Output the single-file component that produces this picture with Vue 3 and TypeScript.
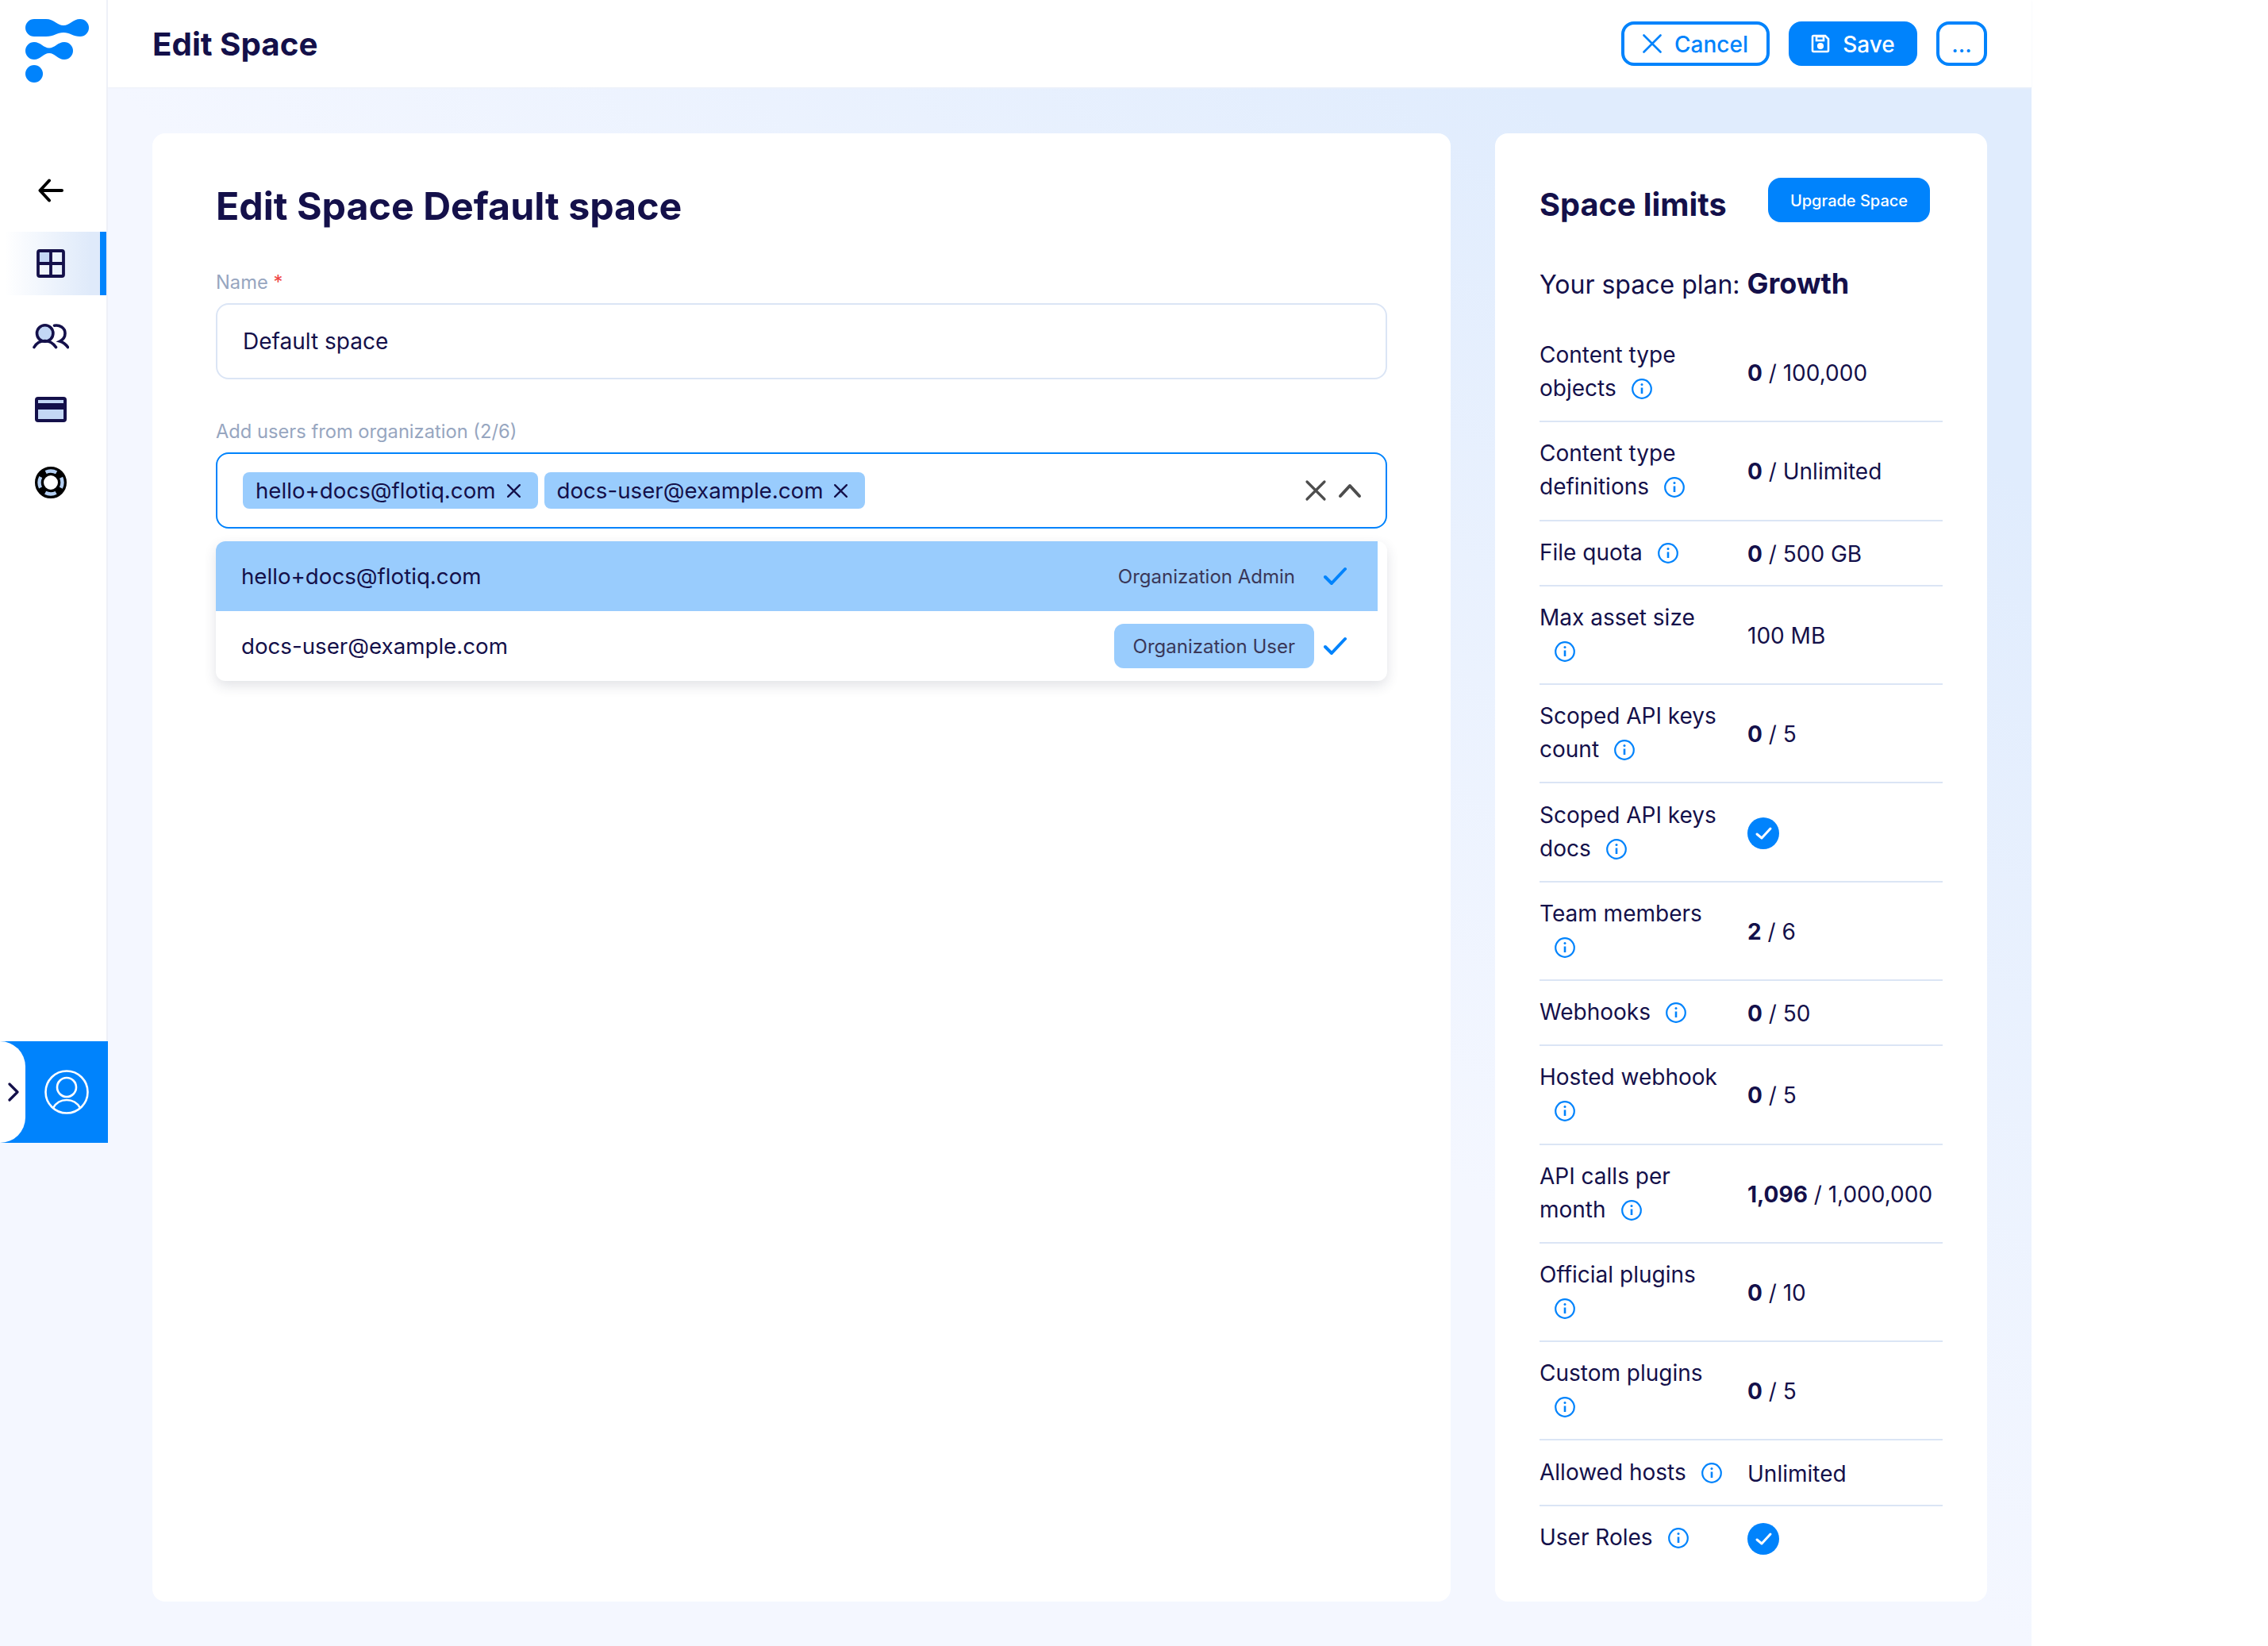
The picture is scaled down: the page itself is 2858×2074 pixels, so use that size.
<script setup lang="ts">
interface Row {
  label: string
  strong?: string
  rest?: string
  check?: boolean
}
const rows: Row[] = [
  { label: 'Content type objects', strong: '0', rest: ' / 100,000' },
  { label: 'Content type definitions', strong: '0', rest: ' / Unlimited' },
  { label: 'File quota', strong: '0', rest: ' / 500 GB' },
  { label: 'Max asset size', rest: '100 MB' },
  { label: 'Scoped API keys count', strong: '0', rest: ' / 5' },
  { label: 'Scoped API keys docs', check: true },
  { label: 'Team members', strong: '2', rest: ' / 6' },
  { label: 'Webhooks', strong: '0', rest: ' / 50' },
  { label: 'Hosted webhook', strong: '0', rest: ' / 5' },
  { label: 'API calls per month', strong: '1,096', rest: ' / 1,000,000' },
  { label: 'Official plugins', strong: '0', rest: ' / 10' },
  { label: 'Custom plugins', strong: '0', rest: ' / 5' },
  { label: 'Allowed hosts', rest: 'Unlimited' },
  { label: 'User Roles', check: true },
]
const chips: string[] = ['hello+docs@flotiq.com', 'docs-user@example.com']
</script>

<template>
  <div class="app">
    <aside class="sidebar">
      <svg class="logo" viewBox="0 0 80 80" fill="#0083fc">
        <path d="M11 0H26C36 0 40 8 48 8C56 8 60 0 69 0A11 11 0 0 1 69 22C60 22 56 17 48 17C40 17 36 22 26 22H11A11 11 0 0 1 11 0Z" />
        <path d="M11 29C19 29 23 36.5 30 36.5C37 36.5 41 29 49 29A11 11 0 0 1 49 51C41 51 37 43 30 43C23 43 19 51 11 51A11 11 0 0 1 11 29Z" />
        <circle cx="11" cy="69" r="11" />
      </svg>
      <nav class="nav">
        <div class="nav-item">
          <svg width="32" height="30" viewBox="0 0 32 30" fill="none" stroke="#000" stroke-width="4" stroke-linecap="round" stroke-linejoin="round">
            <path d="M2.5 15H30M14 2.5L2.5 15L14 27.5" />
          </svg>
        </div>
        <div class="nav-item active">
          <svg width="36" height="36" viewBox="0 0 36 36" fill="none">
            <rect x="2" y="2" width="16" height="16" fill="#c3d7f5" />
            <rect x="2" y="2" width="32" height="32" rx="2" stroke="#14104a" stroke-width="3.8" />
            <path d="M18 2V34M2 18H34" stroke="#14104a" stroke-width="3.8" />
          </svg>
        </div>
        <div class="nav-item">
          <svg width="46" height="32" viewBox="0 0 46 32" fill="none" stroke="#14104a" stroke-width="3.6" stroke-linecap="round">
            <circle cx="15.7" cy="12" r="10.2" fill="#c3d7f5" />
            <path d="M2 29.5C5 24 10 21.5 15.7 21.5C21 21.5 26 24.5 29.5 29.5" />
            <path d="M27.5 2.2C34 1 41 5 41 12C41 16 38.5 20 34.5 22C38 23 42 26 44.5 29.5" />
          </svg>
        </div>
        <div class="nav-item">
          <svg width="40" height="32" viewBox="0 0 40 32">
            <rect width="40" height="32" rx="4" fill="#14104a" />
            <rect x="4" y="4" width="32" height="4" fill="#c3d7f5" />
            <rect x="4" y="16" width="32" height="12" fill="#c3d7f5" />
          </svg>
        </div>
        <div class="nav-item">
          <svg width="40" height="40" viewBox="0 0 40 40" fill="none">
            <circle cx="20" cy="20" r="14.5" stroke="#000" stroke-width="11" />
            <circle cx="20" cy="20" r="14.5" stroke="#b4cff2" stroke-width="4.4" stroke-dasharray="14 8.78" stroke-dashoffset="7" />
          </svg>
        </div>
      </nav>
      <div class="user">
        <div class="user-tab">
          <svg width="16" height="24" viewBox="0 0 16 24" fill="none" stroke="#14104a" stroke-width="3.2" stroke-linecap="round" stroke-linejoin="round">
            <path d="M3 2L13 12L3 22" />
          </svg>
        </div>
        <svg class="user-ic" viewBox="0 0 56 56" fill="none" stroke="#fff" stroke-width="2.6">
          <circle cx="28" cy="28" r="26.5" />
          <circle cx="28" cy="22" r="12" />
          <path d="M11 48C15 41 21 38 28 38C35 38 41 41 45 48" />
        </svg>
      </div>
    </aside>

    <div class="main">
      <header class="topbar">
        <h1 class="page-title">Edit Space</h1>
        <div class="actions">
          <button class="btn outline">
            <svg width="24" height="24" viewBox="0 0 24 24" fill="none" stroke="#0083fc" stroke-width="2.6" stroke-linecap="round">
              <path d="M1.5 1.5L22.5 22.5M22.5 1.5L1.5 22.5" />
            </svg>
            <span class="btn-text">Cancel</span>
          </button>
          <button class="btn solid">
            <svg width="24" height="24" viewBox="0 0 24 24" fill="none" stroke="#fff" stroke-width="2.6">
              <path d="M2 3.5A1.5 1.5 0 0 1 3.5 2H18L22 6V20.5A1.5 1.5 0 0 1 20.5 22H3.5A1.5 1.5 0 0 1 2 20.5Z" />
              <rect x="7" y="3" width="9" height="5" />
              <circle cx="12" cy="15" r="2.8" fill="#fff" />
            </svg>
            <span class="btn-text">Save</span>
          </button>
          <button class="btn outline more"><span class="btn-text">...</span></button>
        </div>
      </header>

      <div class="content">
        <section class="card form-card">
          <h2 class="form-title">Edit Space Default space</h2>
          <label class="field-label">Name <span class="req">*</span></label>
          <div class="input">Default space</div>
          <label class="field-label second">Add users from organization (2/6)</label>
          <div class="select">
            <div class="chips">
              <span v-for="c in chips" :key="c" class="chip">
                {{ c }}
                <svg width="19" height="19" viewBox="0 0 18 18" fill="none" stroke="#14104a" stroke-width="2.2" stroke-linecap="round">
                  <path d="M2 2L16 16M16 2L2 16" />
                </svg>
              </span>
            </div>
            <svg class="sel-x" width="28" height="28" viewBox="0 0 28 28" fill="none" stroke="#4d4d4d" stroke-width="3.2" stroke-linecap="round">
              <path d="M3 3L25 25M25 3L3 25" />
            </svg>
            <svg width="30" height="20" viewBox="0 0 30 20" fill="none" stroke="#4d4d4d" stroke-width="4" stroke-linecap="round" stroke-linejoin="round">
              <path d="M3 17L15 4L27 17" />
            </svg>
          </div>
          <div class="menu">
            <div class="option hover">
              <span class="opt-name">hello+docs@flotiq.com</span>
              <span class="role">Organization Admin</span>
              <svg class="tick" width="30" height="24" viewBox="0 0 30 24" fill="none" stroke="#0083fc" stroke-width="4" stroke-linecap="round" stroke-linejoin="round">
                <path d="M2 13L10 21L27 3" />
              </svg>
            </div>
            <div class="option">
              <span class="opt-name">docs-user@example.com</span>
              <span class="role pill">Organization User</span>
              <svg class="tick" width="30" height="24" viewBox="0 0 30 24" fill="none" stroke="#0083fc" stroke-width="4" stroke-linecap="round" stroke-linejoin="round">
                <path d="M2 13L10 21L27 3" />
              </svg>
            </div>
          </div>
        </section>

        <section class="card limits-card">
          <div class="limits-head">
            <h3 class="limits-title">Space limits</h3>
            <button class="upgrade">Upgrade Space</button>
          </div>
          <p class="plan">Your space plan: <strong>Growth</strong></p>
          <div class="rows">
            <div v-for="r in rows" :key="r.label" class="row">
              <div class="row-label">{{ r.label }}<svg class="info" viewBox="0 0 26 26" fill="none" stroke="#0083fc" stroke-width="2.2">
                  <circle cx="13" cy="13" r="11.8" />
                  <path d="M13 11.5V19" stroke-width="2.6" />
                  <circle cx="13" cy="7.6" r="1.5" fill="#0083fc" stroke="none" />
                </svg></div>
              <div class="row-value">
                <svg v-if="r.check" class="check" viewBox="0 0 40 40">
                  <circle cx="20" cy="20" r="20" fill="#0083fc" />
                  <path d="M12 21L18 26L29 14" fill="none" stroke="#fff" stroke-width="3" stroke-linecap="round" stroke-linejoin="round" />
                </svg>
                <template v-else><strong v-if="r.strong">{{ r.strong }}</strong>{{ r.rest }}</template>
              </div>
            </div>
          </div>
        </section>
      </div>
    </div>
  </div>
</template>

<style>
html, body { margin: 0; background: #fff; }
</style>

<style scoped>
.app {
  display: flex;
  align-items: stretch;
  width: 2560px;
  height: 2074px;
  font-family: Inter, "Noto Sans", sans-serif;
  color: #14104a;
  background: linear-gradient(to top right, #f4f7ff 50%, #e0ecfd 85%, #e0ecfd 100%);
}
.sidebar {
  width: 136px;
  flex: none;
  align-self: flex-start;
  box-sizing: border-box;
  border-right: 2px solid #eef0f8;
  background: #fff;
  display: flex;
  flex-direction: column;
}
.logo { width: 80px; height: 80px; margin: 24px 0 0 32px; display: block; }
.nav { margin-top: 96px; display: flex; flex-direction: column; gap: 12px; }
.nav-item {
  height: 80px;
  width: 134px;
  display: flex;
  align-items: center;
  justify-content: center;
  box-sizing: border-box;
  padding-right: 6px;
}
.nav-item.active {
  background: linear-gradient(90deg, #fff 5%, #dfeafa 90%);
  border-right: 8px solid #0083fc;
  padding-right: 0;
  padding-left: 2px;
}
.user {
  margin-top: 664px;
  width: 136px;
  height: 128px;
  background: #0083fc;
  display: flex;
  align-items: center;
}
.user-tab {
  width: 32px;
  height: 128px;
  background: #fff;
  border-radius: 0 32px 32px 0;
  display: flex;
  align-items: center;
  justify-content: flex-start;
  padding-left: 9px;
  box-sizing: border-box;
}
.user-ic { width: 56px; height: 56px; margin-left: 24px; display: block; }

.main { flex: 1; display: flex; flex-direction: column; min-width: 0; }
.topbar {
  height: 110px;
  flex: none;
  box-sizing: border-box;
  background: #fff;
  display: flex;
  align-items: center;
  justify-content: space-between;
  padding: 0 56px;
  box-shadow: 0 1px 2px #eef1f7;
}
.page-title { margin: 0; padding-top: 2px; font-size: 40.3px; font-weight: 700; line-height: 1; }
.actions { display: flex; gap: 24px; }
.btn {
  height: 56px;
  box-sizing: border-box;
  border-radius: 16px;
  font-family: inherit;
  font-size: 28px;
  font-weight: 500;
  display: flex;
  align-items: center;
  justify-content: center;
  gap: 16px;
  padding: 0;
}
.btn-text { padding-top: 2px; }
.btn.outline { background: #fff; border: 4px solid #0083fc; color: #0083fc; width: 187px; }
.btn.solid { background: #0083fc; border: 0; color: #fff; width: 162px; }
.btn.more { width: 64px; }

.content {
  flex: 1;
  display: grid;
  grid-template-columns: 1636px 620px;
  gap: 56px;
  padding: 58px 56px 56px;
  min-height: 0;
}
.card { background: #fff; border-radius: 16px; box-sizing: border-box; }
.form-card { padding: 60px 80px; }
.form-title { margin: 0 0 48px; font-size: 48.3px; line-height: 64px; font-weight: 700; }
.field-label { display: block; font-size: 23.7px; line-height: 32px; color: #97a6c0; margin-bottom: 10px; }
.field-label.second { margin-top: 50px; }
.req { color: #ef4444; }
.input {
  height: 96px;
  box-sizing: border-box;
  border: 2px solid #dbe5f5;
  border-radius: 16px;
  padding: 0 32px;
  display: flex;
  align-items: center;
  font-size: 28px;
}
.select {
  height: 96px;
  box-sizing: border-box;
  border: 2px solid #0083fc;
  border-radius: 16px;
  padding: 0 30px 0 32px;
  display: flex;
  align-items: center;
}
.chips { flex: 1; display: flex; gap: 8px; }
.chip {
  height: 46px;
  background: #99ccfd;
  border-radius: 8px;
  padding: 0 21px 0 16px;
  display: flex;
  align-items: center;
  gap: 13px;
  font-size: 27.7px;
}
.sel-x { margin-right: 14px; }
.menu {
  margin-top: 16px;
  background: #fff;
  border-radius: 12px;
  box-shadow: 0 6px 16px rgba(40, 50, 80, 0.14);
  padding-right: 12px;
}
.option {
  height: 88px;
  display: flex;
  align-items: center;
  padding: 0 38px 0 32px;
  font-size: 27.7px;
}
.option.hover { background: #99ccfd; border-radius: 12px 0 0 0; }
.opt-name { flex: 1; }
.role { font-size: 24px; color: #3a3758; padding: 2px 24px 0; line-height: 54px; }
.role.pill { background: #99ccfd; border-radius: 12px; }
.tick { margin-left: 12px; }

.limits-card { padding: 56px 56px 0; }
.limits-head { display: flex; align-items: flex-start; justify-content: space-between; padding-right: 16px; }
.limits-title { margin: 6px 0 0; font-size: 39.7px; font-weight: 700; line-height: 56px; }
.upgrade {
  width: 204px;
  height: 56px;
  border: 0;
  border-radius: 16px;
  background: #0083fc;
  color: #fff;
  font-family: inherit;
  font-size: 20px;
  font-weight: 500;
  padding: 2px 0 0;
}
.plan { margin: 49px 0 27px; font-size: 32px; line-height: 44px; }
.plan strong { font-size: 36px; font-weight: 700; }
.row {
  display: grid;
  grid-template-columns: 262px 1fr;
  align-items: center;
  padding: 19.15px 0;
  border-bottom: 2px solid #dbe5f5;
  font-size: 28px;
  line-height: 42px;
}
.row:last-child { border-bottom: 0; }
.row-label { padding-right: 28px; margin: -1px 0 1px; }
.row-value { margin: 1px 0 -1px; }
.info { width: 26px; height: 26px; margin-left: 19px; vertical-align: -4px; }
.row-value strong { font-weight: 700; }
.check { width: 40px; height: 40px; display: block; }
</style>
